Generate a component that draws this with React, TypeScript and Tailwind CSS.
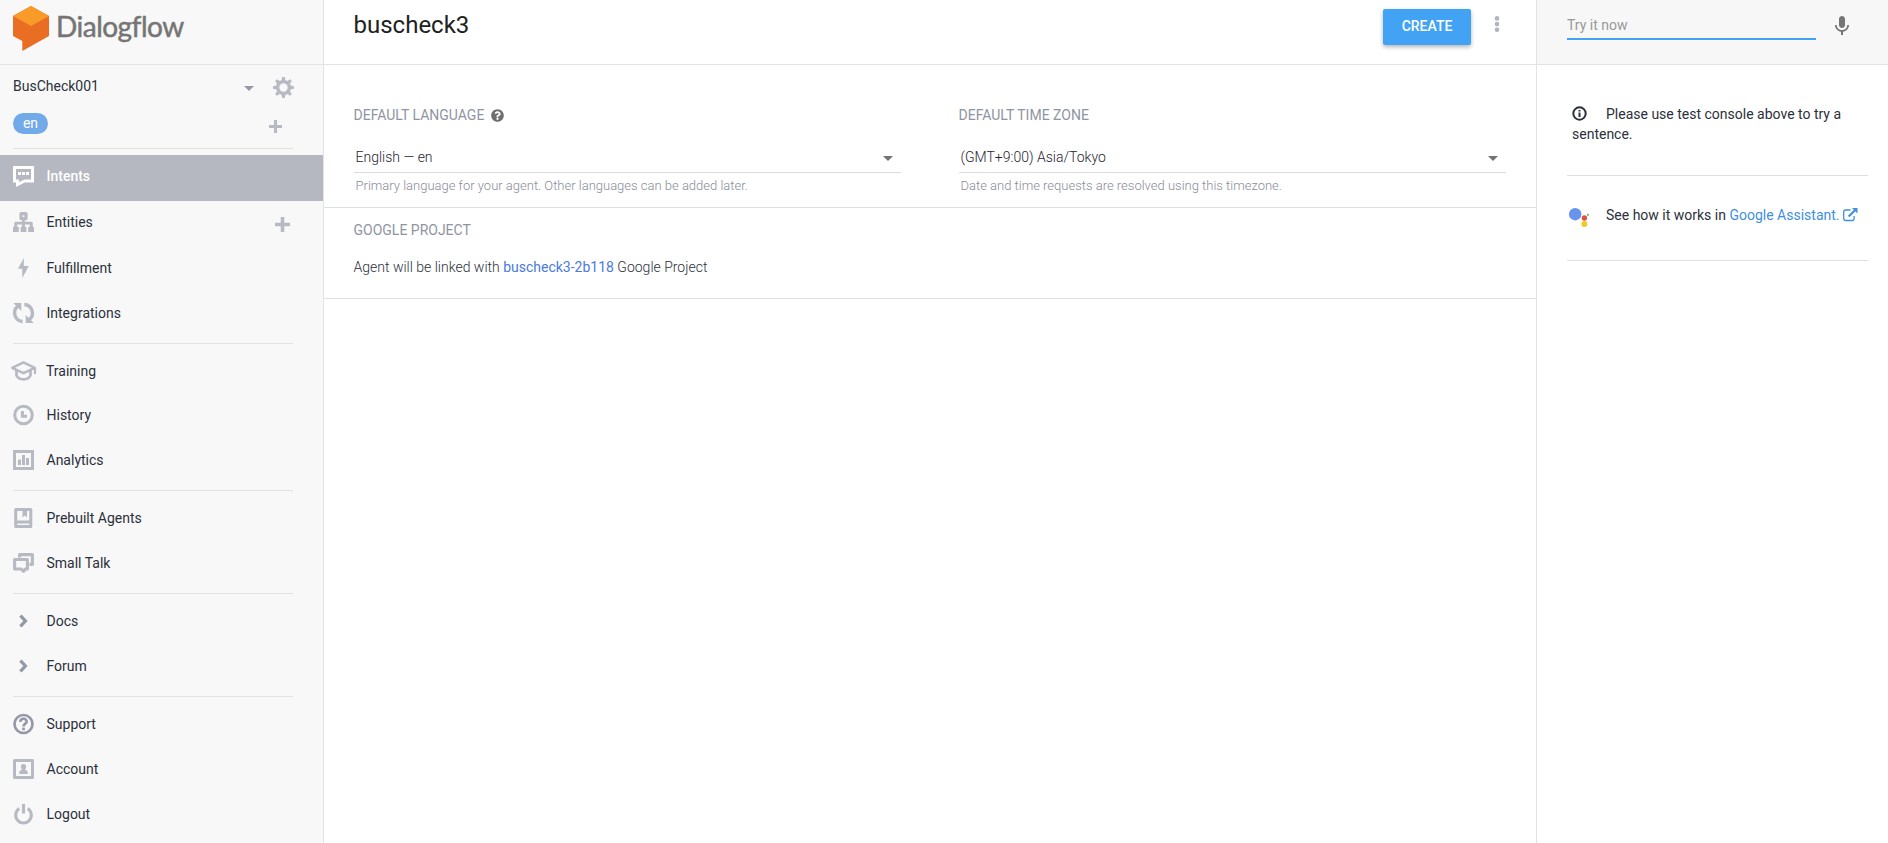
import React from 'react';
import { FaQuestionCircle } from 'react-icons/fa';
import { MdKeyboardVoice } from 'react-icons/md';

interface NavItem {
  label: string;
  icon: React.ReactNode;
  active?: boolean;
  addable?: boolean;
  height?: string;
  gap?: string;
}

const Icon: React.FC<{ children: React.ReactNode; className?: string }> = ({ children, className }) => (
  <svg width="21" height="20" viewBox="0 0 21 20" fill="none" className={`shrink-0 overflow-visible ${className || 'text-[#b7b9c3]'}`}>
    {children}
  </svg>
);

const ChevronIcon = () => (
  <Icon className="text-[#9598a8]">
    <path d="M7.4 4.6 L12.4 10 L7.4 15.4" stroke="currentColor" strokeWidth="3.3" />
  </Icon>
);

const PlusIcon: React.FC<{ size: number }> = ({ size }) => (
  <svg width={size} height={size} viewBox="0 0 14 14" className="text-[#b7b9c3]">
    <path d="M7 0 V14 M0 7 H14" stroke="currentColor" strokeWidth="3.3" />
  </svg>
);

const Caret: React.FC<{ className: string }> = ({ className }) => (
  <svg width="10" height="5" viewBox="0 0 10 5" className={className}>
    <path d="M0 0 H10 L5 5 Z" fill="currentColor" />
  </svg>
);

const GearIcon = () => (
  <svg width="21" height="21" viewBox="0 0 20 20" fill="none" className="text-[#b7b9c3]">
    <circle cx="10" cy="10" r="5.6" stroke="currentColor" strokeWidth="3.2" />
    {[0, 45, 90, 135, 180, 225, 270, 315].map(angle => (
      <path key={angle} d="M7.8 4.5 L8.8 0 H11.2 L12.2 4.5 Z" fill="currentColor" transform={`rotate(${angle} 10 10)`} />
    ))}
  </svg>
);

const navGroups: NavItem[][] = [
  [
    {
      label: 'Intents',
      active: true,
      height: 'h-[46px]',
      icon: (
        <Icon className="text-white">
          <path d="M1.5 1.5 H19.5 V15 H11.5 L4.5 18.5 V15 H1.5 Z" stroke="currentColor" strokeWidth="3" />
          <path d="M5 6 H8 V9 H5 Z M9 6 H12 V9 H9 Z M13 6 H16 V9 H13 Z" fill="currentColor" />
        </Icon>
      ),
    },
    {
      label: 'Entities',
      addable: true,
      height: 'h-[46px]',
      icon: (
        <Icon>
          <path d="M8 1.6 H13 V6.6 H8 Z" stroke="currentColor" strokeWidth="3.2" strokeLinejoin="round" />
          <path d="M10.5 8 V16 M2.7 16 V11.2 H18.3 V16" stroke="currentColor" strokeWidth="2.8" strokeLinejoin="round" />
          <path d="M1 14.6 H4.8 L5.8 15.6 V20 H0 V15.6 Z M8.6 14.6 H12.4 L13.4 15.6 V20 H7.6 V15.6 Z M16.2 14.6 H20 L21 15.6 V20 H15.2 V15.6 Z" fill="currentColor" />
        </Icon>
      ),
    },
    {
      label: 'Fulfillment',
      icon: (
        <Icon>
          <path d="M10.8 0 L5 10.8 H9.3 V20 L15.8 8 H10.8 Z" fill="currentColor" />
        </Icon>
      ),
    },
    {
      label: 'Integrations',
      icon: (
        <Icon>
          <path d="M9.6 18.5 A8.6 8.6 0 0 1 4.4 3.6 M11.4 1.5 A8.6 8.6 0 0 1 16.6 16.4" stroke="currentColor" strokeWidth="3.4" />
          <path d="M0.3 0 H8.3 V8 Z M20.7 20 H12.7 V12 Z" fill="currentColor" />
        </Icon>
      ),
    },
  ],
  [
    {
      label: 'Training',
      height: 'h-[44px]',
      gap: 'gap-[12px]',
      icon: (
        <Icon>
          <path d="M-0.8 6.8 L10.5 1.4 L21.8 6.8 L10.5 12.2 Z" stroke="currentColor" strokeWidth="2.4" strokeLinejoin="round" />
          <path d="M3.5 9 V14.5 C6 19.6 15 19.6 17.5 14.5 V9" stroke="currentColor" strokeWidth="2.7" />
          <path d="M22 6.5 V13" stroke="currentColor" strokeWidth="2.2" />
        </Icon>
      ),
    },
    {
      label: 'History',
      icon: (
        <Icon>
          <circle cx="10.5" cy="10" r="8.8" stroke="currentColor" strokeWidth="3" />
          <path d="M9.4 6 V11.2 H14" stroke="currentColor" strokeWidth="3" />
        </Icon>
      ),
    },
    {
      label: 'Analytics',
      icon: (
        <Icon>
          <path d="M1.5 1.5 H19.5 V18.5 H1.5 Z" stroke="currentColor" strokeWidth="3" />
          <path d="M5 9.5 H8 V15 H5 Z M9 5 H12 V15 H9 Z M13 8 H16 V15 H13 Z" fill="currentColor" />
        </Icon>
      ),
    },
  ],
  [
    {
      label: 'Prebuilt Agents',
      icon: (
        <Icon>
          <path d="M2.7 1.5 H17.8 V18.5 H2.7 Z M2.7 14 H18" stroke="currentColor" strokeWidth="3" strokeLinejoin="round" />
          <path d="M9.5 2 H14 V9.5 L11.8 7.6 L9.5 9.5 Z" fill="currentColor" />
        </Icon>
      ),
    },
    {
      label: 'Small Talk',
      icon: (
        <Icon>
          <path d="M1.6 6.5 H14.4 V16 H12.4 L10.6 18.3 L8.1 16 H1.6 Z" stroke="currentColor" strokeWidth="3.1" strokeLinejoin="round" />
          <path d="M6.6 4.5 V1.6 H19.4 V11.4 H16.5" stroke="currentColor" strokeWidth="3.1" strokeLinejoin="round" />
        </Icon>
      ),
    },
  ],
  [
    { label: 'Docs', icon: <ChevronIcon /> },
    { label: 'Forum', icon: <ChevronIcon /> },
  ],
  [
    {
      label: 'Support',
      icon: (
        <Icon className="text-[#9598a8]">
          <circle cx="10.5" cy="10" r="9" stroke="currentColor" strokeWidth="2.7" />
          <path d="M7.3 8 C7.3 3.8 13.7 3.8 13.7 7.7 C13.7 9.8 10.5 9.6 10.5 12.6" stroke="currentColor" strokeWidth="2.6" />
          <path d="M9.1 13.6 H11.9 V16.2 H9.1 Z" fill="currentColor" />
        </Icon>
      ),
    },
    {
      label: 'Account',
      icon: (
        <Icon>
          <path d="M1.5 1.5 H19.5 V18.5 H1.5 Z" stroke="currentColor" strokeWidth="3" strokeLinejoin="round" />
          <circle cx="10.5" cy="7.6" r="2.7" fill="currentColor" />
          <path d="M6.3 15 V12.5 L8.8 10.5 V9 H12.2 V10.5 L14.7 12.5 V15 Z" fill="currentColor" />
        </Icon>
      ),
    },
    {
      label: 'Logout',
      icon: (
        <Icon>
          <path d="M6.3 4.6 A7.8 7.8 0 1 0 14.7 4.6" stroke="currentColor" strokeWidth="3" />
          <path d="M10.5 0 V9.5" stroke="currentColor" strokeWidth="3.1" />
        </Icon>
      ),
    },
  ],
];

const NavRow: React.FC<{ item: NavItem }> = ({ item }) => (
  <a className={`flex pl-[13px] pr-[33px] ${item.height || 'h-[45px]'} ${item.active ? 'bg-[#b5b7c1] text-white font-medium' : ''}`}>
    <span className={`flex h-[42px] flex-1 items-center ${item.gap || 'gap-[12.5px]'}`}>
      {item.icon}
      <span className="leading-[20px]">{item.label}</span>
      {item.addable && (
        <span className="ml-auto pt-1">
          <PlusIcon size={15} />
        </span>
      )}
    </span>
  </a>
);

const Sidebar = () => (
  <aside className="flex w-[324px] shrink-0 flex-col border-r border-[#e3e3e3] bg-[#f8f8f8] text-sm text-[#2b303b]">
    <div className="flex h-[65px] shrink-0 gap-[7px] border-b border-[#e3e3e3] pl-[13px] pt-[6px]">
      <svg width="36" height="45" viewBox="0 0 36 45">
        <path d="M18 0 L36 10 V30 L9.3 45 V35 L0 30 V10 Z" fill="#ea6d24" />
        <path d="M18 0 L36 10 L18 20 L0 10 Z" fill="#f89b28" />
      </svg>
      <span className="mt-[2px] font-['Lato',sans-serif] text-[28px] leading-[36px] tracking-[-0.5px] text-[#757575] [-webkit-text-stroke:0.5px_#757575]">Dialogflow</span>
    </div>

    <div className="flex h-[45px] items-center pl-[13px] pr-[29px]">
      <span className="flex-1 pb-[3px]">BusCheck001</span>
      <Caret className="mr-[19px] mt-[2px] text-[#9598a8]" />
      <GearIcon />
    </div>
    <div className="flex h-[38px] items-start justify-between pl-[13px] pr-[41px] pt-[3px]">
      <span className="h-[21px] w-[35px] rounded-full bg-[#72a9e8] text-center leading-[20px] text-white">en</span>
      <span className="pt-[7px]">
        <PlusIcon size={13} />
      </span>
    </div>
    <hr className="ml-[13px] w-[280px] border-[#e2e2e2]" />

    <nav className="pt-[6px]">
      {navGroups.map((group, i) => (
        <React.Fragment key={i}>
          {i > 0 && <hr className="my-[6px] ml-[13px] w-[280px] border-[#e2e2e2]" />}
          {group.map(item => (
            <NavRow key={item.label} item={item} />
          ))}
        </React.Fragment>
      ))}
    </nav>
  </aside>
);

const SelectField: React.FC<{ label: string; value: string; hint: string; help?: boolean }> = ({ label, value, hint, help }) => (
  <div className="w-[547px]">
    <div className="flex h-5 items-center gap-[7px] text-sm text-[#8f94a3]">
      {label}
      {help && <FaQuestionCircle size={13} className="text-[#6f6f6f]" />}
    </div>
    <div className="mt-[19px] flex h-[29px] items-center justify-between border-b border-[#dcdcdc] pb-[3px] pl-[2px] pr-[8px] text-sm font-light text-[#1f2430]">
      {value}
      <Caret className="mt-[3px] text-[#737373]" />
    </div>
    <p className="mt-[3px] pl-[2px] text-[13px] font-light leading-[20px] text-[#888d99]">{hint}</p>
  </div>
);

const MainPanel = () => (
  <main className="flex-1 text-[#2b303b]">
    <header className="flex h-[65px] items-start border-b border-[#e3e3e3] pl-[29.5px] pr-[36px]">
      <h1 className="mt-[9px] flex-1 text-2xl leading-[32px] text-[#212121]">buscheck3</h1>
      <button className="mt-[9px] h-[36px] w-[88px] rounded-[2px] bg-[#42a2f3] pb-[2px] text-sm font-medium text-white shadow-[0_2px_4px_rgba(0,0,0,0.3)]">
        CREATE
      </button>
      <svg width="6" height="18" viewBox="0 0 6 18" className="ml-[23px] mt-[15px] text-[#b1b3bd]">
        <circle cx="3" cy="3.4" r="2.3" fill="currentColor" />
        <circle cx="3" cy="9.1" r="2.3" fill="currentColor" />
        <circle cx="3" cy="14.8" r="2.3" fill="currentColor" />
      </svg>
    </header>

    <section className="flex h-[143px] gap-[58px] border-b border-[#e0e0e0] pl-[29.5px] pt-[40px]">
      <SelectField label="DEFAULT LANGUAGE" value="English — en" hint="Primary language for your agent. Other languages can be added later." help />
      <SelectField label="DEFAULT TIME ZONE" value="(GMT+9:00) Asia/Tokyo" hint="Date and time requests are resolved using this timezone." />
    </section>

    <section className="h-[91px] border-b border-[#e0e0e0] pl-[29.5px] pt-[12px] text-sm">
      <h2 className="leading-[20px] text-[#8f94a3]">GOOGLE PROJECT</h2>
      <p className="mt-[17px] font-light leading-[20px]">
        Agent will be linked with <a className="font-normal text-[#4a7bdc]">buscheck3-2b118</a> Google Project
      </p>
    </section>
  </main>
);

const TestConsole = () => (
  <aside className="w-[352px] shrink-0 border-l border-[#e3e3e3] text-sm text-[#2b303b]">
    <div className="flex h-[65px] border-b border-[#e3e3e3] bg-[#f7f7f7] pl-[30px]">
      <div className="h-[40px] w-[249px] border-b-2 border-[#42a2f3] pt-[15px] leading-[20px] text-[#999999]">Try it now</div>
      <MdKeyboardVoice size={24} className="ml-[14px] mt-[13px] text-[#757575]" />
    </div>

    <div className="ml-[30px] w-[301px] border-b border-[#e0e0e0] pb-[31px] pl-[5px] pt-[39px] leading-[20px]">
      <svg width="15" height="15" viewBox="0 0 15 15" fill="none" className="mr-[19px] inline-block align-[-2px]">
        <circle cx="7.5" cy="7.5" r="6.2" stroke="currentColor" strokeWidth="2" />
        <path d="M6.5 6.6 H8.5 V11 H6.5 Z M6.5 3.9 H8.5 V5.6 H6.5 Z" fill="currentColor" />
      </svg>
      Please use test console above to try a sentence.
    </div>

    <div className="ml-[30px] flex h-[85px] w-[301px] items-start border-b border-[#e0e0e0] pl-[2px] pt-[29px] leading-[20px]">
      <svg width="20" height="20" viewBox="0 0 20 20" className="mr-[17px] mt-[3px]">
        <circle cx="6.2" cy="6.2" r="6.2" fill="#6894ee" />
        <circle cx="15.4" cy="10" r="2.7" fill="#df5046" />
        <circle cx="15.4" cy="16" r="3" fill="#eecb24" />
        <circle cx="18.9" cy="6.8" r="1.1" fill="#4fc072" />
      </svg>
      <span>
        See how it works in <a className="text-[#3f8fe0]">Google Assistant.</a>
      </span>
      <svg width="15" height="14" viewBox="0 0 15 14" fill="none" className="ml-[3px] mt-[3px] text-[#3f8fe0]">
        <path d="M7.5 2 H2.6 Q0.7 2 0.7 3.9 V10.6 Q0.7 12.5 2.6 12.5 H9.2 Q11.1 12.5 11.1 10.6 V8" stroke="currentColor" strokeWidth="1.3" />
        <path d="M5.6 8.6 L12 2.2" stroke="currentColor" strokeWidth="2.1" />
        <path d="M9 0 H14.5 V5.5 Z" fill="currentColor" />
      </svg>
    </div>
  </aside>
);

const App = () => (
  <div className="flex h-screen overflow-hidden bg-white font-['Roboto',sans-serif]">
    <Sidebar />
    <MainPanel />
    <TestConsole />
  </div>
);

export default App;
